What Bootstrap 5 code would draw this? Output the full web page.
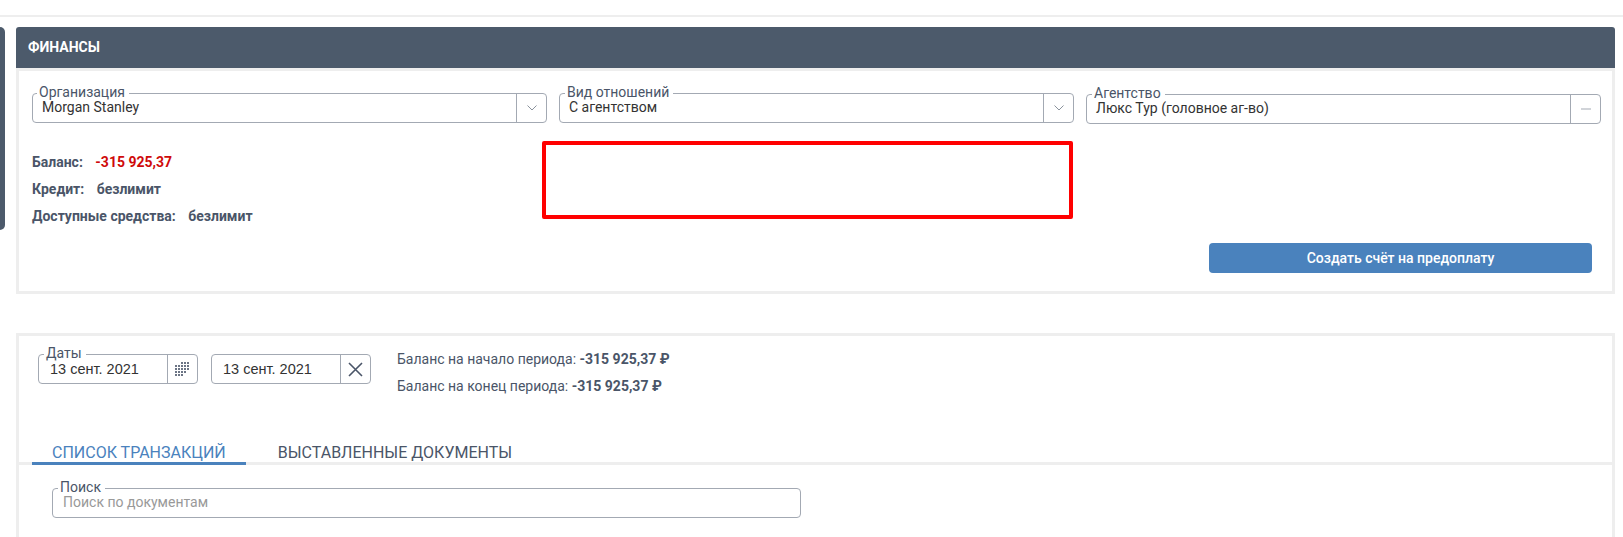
<!DOCTYPE html>
<html lang="ru">
<head>
<meta charset="utf-8">
<title>Финансы</title>
<link href="https://cdn.jsdelivr.net/npm/bootstrap@5.3.0/dist/css/bootstrap.min.css" rel="stylesheet">
<style>
html,body{height:537px;overflow:hidden;}
body{font-family:Roboto,"Liberation Sans",sans-serif;font-size:14px;color:#4a5568;background:#fff;}
.top-rule{height:17px;border-bottom:2px solid #eeeeee;}
.shell{padding-top:10px;}
.side-rail{width:5px;height:203px;background:#4c5a6b;border-radius:0 5px 5px 0;flex:none;}
.main-col{margin-left:11px;width:1599px;flex:none;}
.fin-head{height:41px;background:#4c5a6b;color:#fff;font-weight:700;font-size:14px;padding:0 12px;border-radius:3px 3px 0 0;}
.fin-panel{border:3px solid #eeeeee;height:226px;padding:22px 11px 0 13px;}
.fld{position:relative;border:1px solid #a3a9b3;border-radius:4px;height:30px;display:flex;background:#fff;color:#333;}
.fld-label{position:absolute;left:5px;top:-10px;background:#fff;padding:0 4px 0 2px;line-height:16px;color:#4a5568;font-size:14px;}
.fld-val{flex:1;padding:4px 9px 0 9px;line-height:18px;white-space:nowrap;overflow:hidden;}
.fld-btn{width:30px;border-left:1px solid #a3a9b3;flex:none;display:flex;align-items:center;justify-content:center;}
.triple{gap:12px;}
.triple>.fld{flex:1 1 0;}
.triple>.fld:first-child .fld-label{left:4px;}
.triple>.fld:last-child{margin-top:1px;}
.info-row{margin-top:17px;}
.bal-col{width:510px;flex:none;padding-top:8px;font-size:14px;font-weight:700;line-height:27px;}
.bal-col .gap-lab{margin-right:9px;}
.neg{color:#cf0a0a;}
.redbox{width:531px;height:78px;border:4px solid #ff0000;border-radius:2px;flex:none;}
.pay-row{margin-top:13px;padding-right:9px;}
.pay-btn{width:383px;height:30px;background:#4a82bd;color:#fff;border:0;border-radius:4px;font-size:14px;font-weight:500;padding:0;}
.per-panel{margin-top:39px;border:3px solid #eeeeee;border-bottom:0;height:260px;}
.date-row{padding:18px 19px 0 19px;}
.date1{width:160px;}
.date2{width:160px;margin-left:13px;}
.date1 .fld-val,.date2 .fld-val{padding:5px 0 0 11px;font-family:"Liberation Sans",sans-serif;font-size:14.5px;}
.per-info{margin-left:26px;margin-top:-8px;line-height:27px;font-size:14px;}
.tab-row{margin-top:43px;border-bottom:3px solid #eeeeee;height:22px;padding-left:13px;}
.tab-item{font-size:16px;line-height:20px;padding:0 20px;height:22px;color:#4a5568;text-transform:uppercase;}
.tab-item.on{color:#4a82bd;border-bottom:3px solid #4a82bd;}
.tab-item+.tab-item{margin-left:12px;padding-left:20px;}
.search-wrap{padding:23px 0 0 33px;}
.search-fld{width:749px;}
.search-fld .fld-val{color:#999;padding-left:10px;}
</style>
</head>
<body>
<div class="top-rule"></div>
<div class="shell d-flex align-items-start">
  <div class="side-rail"></div>
  <div class="main-col">
    <div class="fin-head d-flex align-items-center">ФИНАНСЫ</div>
    <div class="fin-panel">
      <div class="d-flex triple">
        <div class="fld"><span class="fld-label">Организация</span><div class="fld-val">Morgan Stanley</div>
          <div class="fld-btn"><svg width="12" height="8" viewBox="0 0 12 8"><path d="M1.5 1.5 6 6l4.5-4.5" fill="none" stroke="#8a929c" stroke-width="1"/></svg></div></div>
        <div class="fld"><span class="fld-label">Вид отношений</span><div class="fld-val">С агентством</div>
          <div class="fld-btn"><svg width="12" height="8" viewBox="0 0 12 8"><path d="M1.5 1.5 6 6l4.5-4.5" fill="none" stroke="#8a929c" stroke-width="1"/></svg></div></div>
        <div class="fld"><span class="fld-label">Агентство</span><div class="fld-val">Люкс Тур (головное аг-во)</div>
          <div class="fld-btn"><svg width="12" height="2" viewBox="0 0 12 2"><path d="M1 1h10" stroke="#a3a9b3" stroke-width="1"/></svg></div></div>
      </div>
      <div class="d-flex align-items-start info-row">
        <div class="bal-col">
          <div><span class="gap-lab">Баланс:</span> <span class="neg">-315 925,37</span></div>
          <div><span class="gap-lab">Кредит:</span> безлимит</div>
          <div><span class="gap-lab">Доступные средства:</span> безлимит</div>
        </div>
        <div class="redbox"></div>
      </div>
      <div class="d-flex justify-content-end pay-row">
        <button type="button" class="btn pay-btn">Создать счёт на предоплату</button>
      </div>
    </div>
    <div class="per-panel">
      <div class="d-flex align-items-start date-row">
        <div class="fld date1"><span class="fld-label">Даты</span><div class="fld-val">13 сент. 2021</div>
          <div class="fld-btn"><svg width="15" height="15" viewBox="0 0 15 15" fill="#4a5568"><g id="dots"><rect x="6.1" y=".1" width="1.8" height="1.8"/><rect x="9.1" y=".1" width="1.8" height="1.8"/><rect x="12.1" y=".1" width="1.8" height="1.8"/><rect x=".1" y="3.1" width="1.8" height="1.8"/><rect x="3.1" y="3.1" width="1.8" height="1.8"/><rect x="6.1" y="3.1" width="1.8" height="1.8"/><rect x="9.1" y="3.1" width="1.8" height="1.8"/><rect x="12.1" y="3.1" width="1.8" height="1.8"/><rect x=".1" y="6.1" width="1.8" height="1.8"/><rect x="3.1" y="6.1" width="1.8" height="1.8"/><rect x="6.1" y="6.1" width="1.8" height="1.8"/><rect x="9.1" y="6.1" width="1.8" height="1.8"/><rect x="12.1" y="6.1" width="1.8" height="1.8"/><rect x=".1" y="9.1" width="1.8" height="1.8"/><rect x="3.1" y="9.1" width="1.8" height="1.8"/><rect x="6.1" y="9.1" width="1.8" height="1.8"/><rect x="9.1" y="9.1" width="1.8" height="1.8"/><rect x=".1" y="12.1" width="1.8" height="1.8"/><rect x="3.1" y="12.1" width="1.8" height="1.8"/><rect x="6.1" y="12.1" width="1.8" height="1.8"/></g></svg></div></div>
        <div class="fld date2"><div class="fld-val">13 сент. 2021</div>
          <div class="fld-btn"><svg width="15" height="15" viewBox="0 0 15 15"><path d="M1 1l13 13M14 1 1 14" stroke="#4a5568" stroke-width="1.6" fill="none"/></svg></div></div>
        <div class="per-info">
          <div>Баланс на начало периода: <b>-315 925,37 ₽</b></div>
          <div>Баланс на конец периода: <b>-315 925,37 ₽</b></div>
        </div>
      </div>
      <div class="d-flex tab-row">
        <div class="tab-item on">Список транзакций</div>
        <div class="tab-item">Выставленные документы</div>
      </div>
      <div class="search-wrap">
        <div class="fld search-fld"><span class="fld-label">Поиск</span><div class="fld-val">Поиск по документам</div></div>
      </div>
    </div>
  </div>
</div>
</body>
</html>
